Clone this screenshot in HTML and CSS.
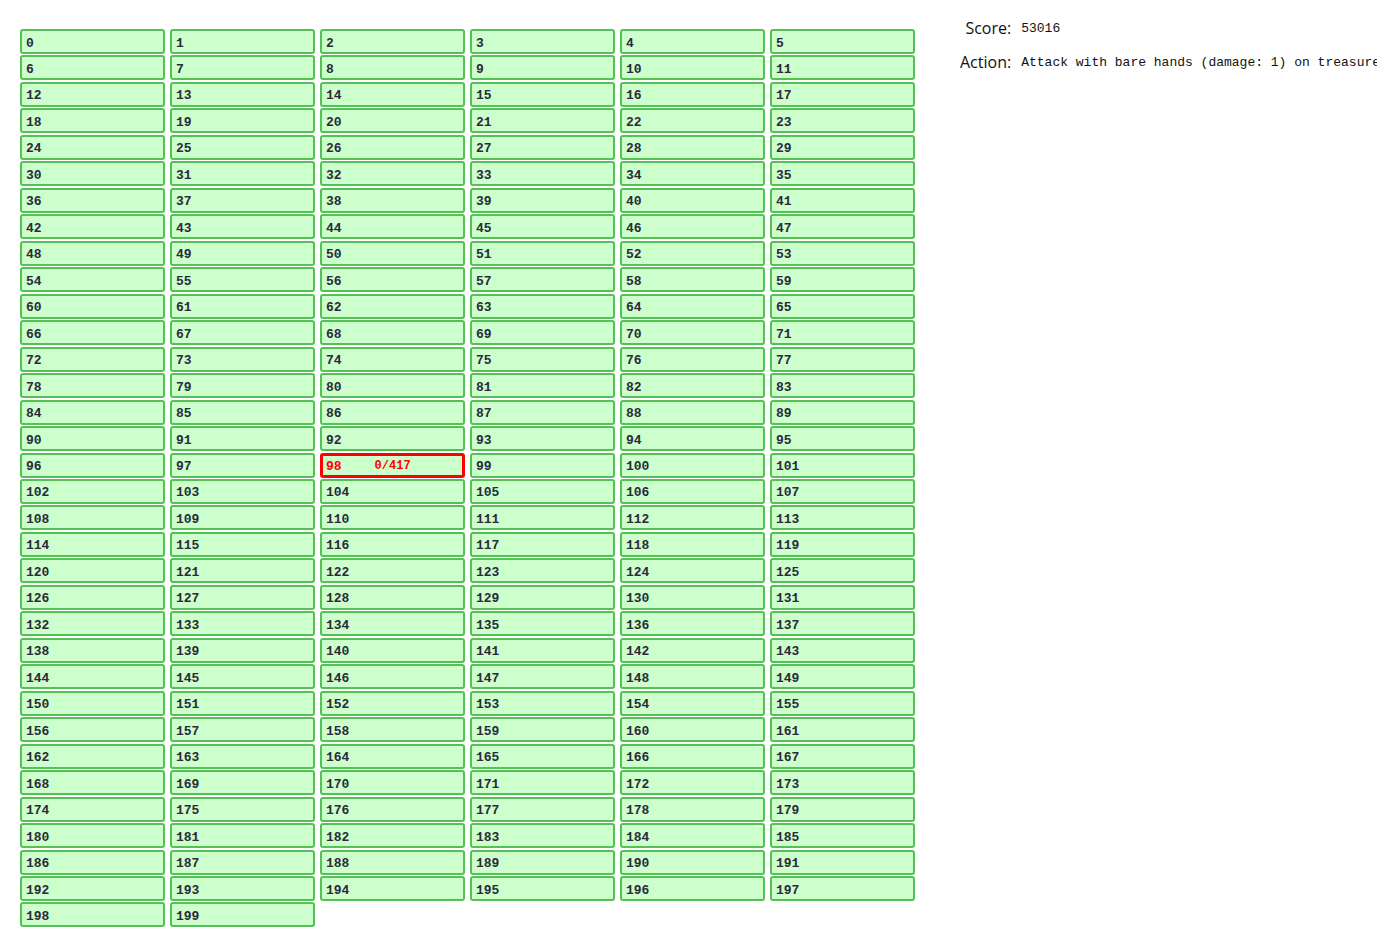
FILE: index.html
```html
<!DOCTYPE html>
<html>
<head>
<meta charset="utf-8">
<link rel="stylesheet" href="styles.css">
</head>
<body>
<div class="page">
  <div class="grid" id="grid"></div>
  <table class="info">
    <tr><td class="label">Score:</td><td class="value">53016</td></tr>
    <tr><td class="label">Action:</td><td class="value">Attack with bare hands (damage: 1) on treasure chest</td></tr>
  </table>
</div>
<script src="app.js"></script>
</body>
</html>
```

FILE: app.js
```js
var g = document.getElementById('grid');
for (var i = 0; i < 200; i++) {
  var d = document.createElement('div');
  d.className = 'cell' + (i === 98 ? ' active' : '');
  var n = document.createElement('span');
  n.className = 'num';
  n.textContent = i;
  d.appendChild(n);
  if (i === 98) {
    var h = document.createElement('span');
    h.className = 'hp';
    h.textContent = '0/417';
    d.appendChild(h);
  }
  g.appendChild(d);
}
```

FILE: styles.css
```css
html, body {
  margin: 0;
  padding: 0;
  overflow: hidden;
  background: #ffffff;
}
.page {
  display: flex;
  align-items: flex-start;
  padding: 29px 0 0 20px;
  width: 1500px;
}
.grid {
  display: grid;
  grid-template-columns: repeat(6, 145px);
  grid-auto-rows: 25px;
  column-gap: 5px;
  row-gap: 1.48px;
  width: 895px;
}
.cell {
  box-sizing: border-box;
  background: #ccffcc;
  border: 2px solid #55c055;
  border-radius: 3px;
  display: flex;
  align-items: center;
  padding: 3px 0 0 4px;
  font-family: "Liberation Mono", monospace;
  font-weight: bold;
  font-size: 13px;
  color: #2a2a3a;
}
.cell.active {
  border: 3px solid #ff0000;
  padding: 2px 0 0 3px;
  color: #ff0000;
}
.hp {
  margin-left: 33px;
  font-size: 12px;
}
.info {
  margin-left: 43px;
  margin-top: -18px;
  border-collapse: separate;
  border-spacing: 2px 0;
}
.info td {
  padding: 0;
  height: 34px;
  vertical-align: middle;
  white-space: nowrap;
}
.label {
  text-align: right;
  font-family: "Open Sans", "Noto Sans", sans-serif;
  font-size: 16px;
  color: #111;
  padding-right: 8px !important;
}
.value {
  font-family: "Liberation Mono", monospace;
  font-size: 13px;
  color: #111;
}
```
